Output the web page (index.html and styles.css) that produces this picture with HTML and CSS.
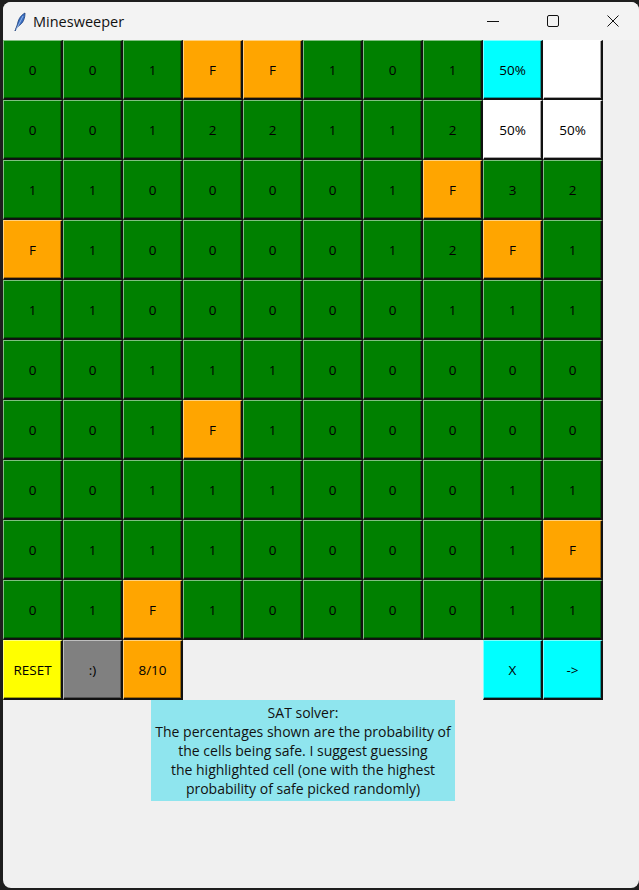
FILE: index.html
```html
<!DOCTYPE html>
<html>
<head>
<meta charset="utf-8">
<link rel="stylesheet" href="styles.css">
</head>
<body>
<div class="window">
  <div class="titlebar">
    <svg class="app-icon" width="12" height="20" viewBox="0 0 12 20">
      <path d="M1 19 L3.5 12 C4.5 6 8 2.5 11 1 C11 6 9.5 11 4.5 14 L2.5 16 Z" fill="#3a6fc4" stroke="#1d3f7a" stroke-width="0.8"/>
      <path d="M2 18 L9 4" stroke="#a9c8f0" stroke-width="0.8"/>
    </svg>
    <span class="title">Minesweeper</span>
    <div class="controls">
      <svg class="ctl" width="14" height="14" viewBox="0 0 14 14"><path d="M1 7.5 H13" stroke="#111" stroke-width="1"/></svg>
      <svg class="ctl" width="14" height="14" viewBox="0 0 14 14"><rect x="1.5" y="1.5" width="11" height="11" rx="1.5" fill="none" stroke="#111" stroke-width="1"/></svg>
      <svg class="ctl" width="14" height="14" viewBox="0 0 14 14"><path d="M1.5 1.5 L12.5 12.5 M12.5 1.5 L1.5 12.5" stroke="#111" stroke-width="1"/></svg>
    </div>
  </div>
  <div class="content">
    <div class="board">
      <div class="cell g">0</div><div class="cell g">0</div><div class="cell g">1</div><div class="cell o">F</div><div class="cell o">F</div><div class="cell g">1</div><div class="cell g">0</div><div class="cell g">1</div><div class="cell c">50%</div><div class="cell w"></div>
      <div class="cell g">0</div><div class="cell g">0</div><div class="cell g">1</div><div class="cell g">2</div><div class="cell g">2</div><div class="cell g">1</div><div class="cell g">1</div><div class="cell g">2</div><div class="cell w">50%</div><div class="cell w">50%</div>
      <div class="cell g">1</div><div class="cell g">1</div><div class="cell g">0</div><div class="cell g">0</div><div class="cell g">0</div><div class="cell g">0</div><div class="cell g">1</div><div class="cell o">F</div><div class="cell g">3</div><div class="cell g">2</div>
      <div class="cell o">F</div><div class="cell g">1</div><div class="cell g">0</div><div class="cell g">0</div><div class="cell g">0</div><div class="cell g">0</div><div class="cell g">1</div><div class="cell g">2</div><div class="cell o">F</div><div class="cell g">1</div>
      <div class="cell g">1</div><div class="cell g">1</div><div class="cell g">0</div><div class="cell g">0</div><div class="cell g">0</div><div class="cell g">0</div><div class="cell g">0</div><div class="cell g">1</div><div class="cell g">1</div><div class="cell g">1</div>
      <div class="cell g">0</div><div class="cell g">0</div><div class="cell g">1</div><div class="cell g">1</div><div class="cell g">1</div><div class="cell g">0</div><div class="cell g">0</div><div class="cell g">0</div><div class="cell g">0</div><div class="cell g">0</div>
      <div class="cell g">0</div><div class="cell g">0</div><div class="cell g">1</div><div class="cell o">F</div><div class="cell g">1</div><div class="cell g">0</div><div class="cell g">0</div><div class="cell g">0</div><div class="cell g">0</div><div class="cell g">0</div>
      <div class="cell g">0</div><div class="cell g">0</div><div class="cell g">1</div><div class="cell g">1</div><div class="cell g">1</div><div class="cell g">0</div><div class="cell g">0</div><div class="cell g">0</div><div class="cell g">1</div><div class="cell g">1</div>
      <div class="cell g">0</div><div class="cell g">1</div><div class="cell g">1</div><div class="cell g">1</div><div class="cell g">0</div><div class="cell g">0</div><div class="cell g">0</div><div class="cell g">0</div><div class="cell g">1</div><div class="cell o">F</div>
      <div class="cell g">0</div><div class="cell g">1</div><div class="cell o">F</div><div class="cell g">1</div><div class="cell g">0</div><div class="cell g">0</div><div class="cell g">0</div><div class="cell g">0</div><div class="cell g">1</div><div class="cell g">1</div>
      <div class="cell y">RESET</div><div class="cell gr">:)</div><div class="cell o">8/10</div>
      <div class="cell c col9">X</div><div class="cell c">-&gt;</div>
      <div class="info">SAT solver:<br>The percentages shown are the probability of<br>the cells being safe. I suggest guessing<br>the highlighted cell (one with the highest<br>probability of safe picked randomly)</div>
    </div>
  </div>
</div>
</body>
</html>
```

FILE: styles.css
```css
html, body {
  margin: 0;
  padding: 0;
  background: #1e1e1e;
  overflow: hidden;
}
.window {
  margin: 2px 0 0 3px;
  width: 636px;
  height: 886px;
  background: #f0f0f0;
  border-radius: 8px;
  overflow: hidden;
  font-family: "Open Sans", "Noto Sans", sans-serif;
}
.titlebar {
  height: 38px;
  background: #f3f3f3;
  display: flex;
  align-items: center;
  padding-left: 11px;
  box-sizing: border-box;
}
.app-icon {
  margin-right: 7px;
  margin-top: 1px;
}
.title {
  font-family: "Open Sans", "Noto Sans", sans-serif;
  font-size: 14.5px;
  color: #111;
}
.controls {
  margin-left: auto;
  display: flex;
  align-items: center;
  gap: 0;
}
.ctl {
  width: 14px;
  height: 14px;
  padding: 0 23px;
}
.ctl:last-child {
  padding-right: 19px;
}
.content {
  height: 848px;
}
.board {
  display: grid;
  grid-template-columns: repeat(10, 60px);
  grid-auto-rows: 60px;
}
.cell {
  box-sizing: border-box;
  display: flex;
  align-items: center;
  justify-content: center;
  font-size: 13.5px;
  color: #000;
  border-top: 1px solid rgba(255, 255, 255, 0.5);
  border-left: 1px solid rgba(255, 255, 255, 0.5);
  border-right: 2px solid #111;
  border-bottom: 2px solid #111;
  box-shadow: inset -1px -1px 0 rgba(0, 0, 0, 0.35);
}
.g { background: #008000; }
.o { background: #ffa500; }
.c { background: #00ffff; }
.w { background: #ffffff; }
.y { background: #ffff00; }
.gr { background: #808080; }
.col9 { grid-column: 9; }
.info {
  grid-column: 3 / 9;
  grid-row: 12;
  justify-self: center;
  align-self: start;
  background: #8fe5ee;
  padding: 3px 4px;
  font-size: 14px;
  line-height: 19px;
  text-align: center;
  color: #111;
  white-space: nowrap;
}
```
